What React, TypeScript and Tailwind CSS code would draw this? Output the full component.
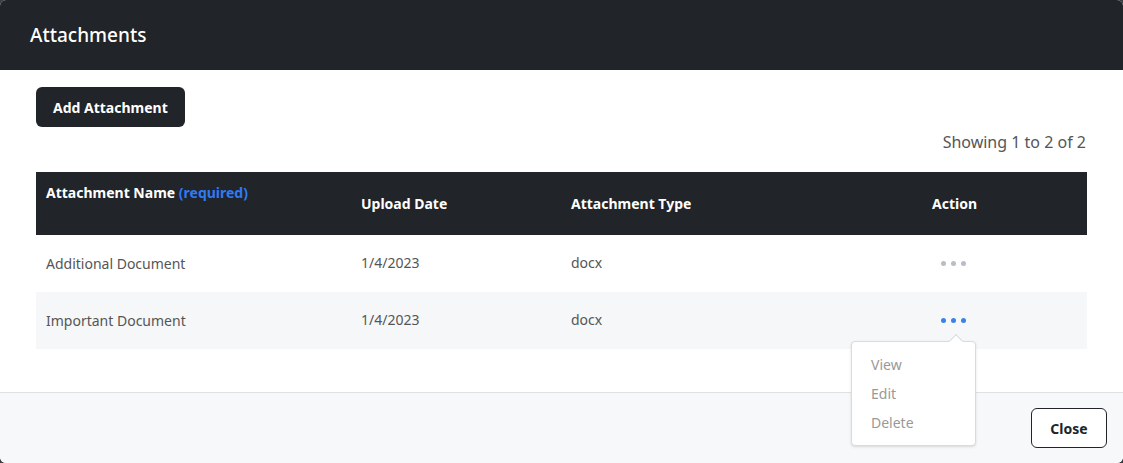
import { useState } from 'react';

const ROWS = [
  { name: 'Additional Document', date: '1/4/2023', type: 'docx' },
  { name: 'Important Document', date: '1/4/2023', type: 'docx' },
];

function Dots({ active }: { active?: boolean }) {
  const c = active ? 'bg-[#3b82e6]' : 'bg-[#b7bec6]';
  return (
    <div className="flex gap-[5px]">
      <span className={`h-[5px] w-[5px] rounded-full ${c}`} />
      <span className={`h-[5px] w-[5px] rounded-full ${c}`} />
      <span className={`h-[5px] w-[5px] rounded-full ${c}`} />
    </div>
  );
}

export default function App() {
  const [open] = useState(1);
  return (
    <div className="h-[463px] w-[1123px] bg-[#3a3d42] font-['Inter','Liberation_Sans',sans-serif]">
      <div className="flex h-full flex-col overflow-hidden rounded-md bg-white">
        <div className="flex h-[70px] shrink-0 items-center bg-[#212429] px-[30px] text-[19px] font-medium text-white">
          Attachments
        </div>
        <div className="flex flex-1 flex-col px-9 pt-[17px]">
          <div>
            <button className="h-10 rounded-md bg-[#212429] px-[17px] text-[14px] font-bold text-white">
              Add Attachment
            </button>
          </div>
          <div className="mt-[3px] pr-[1px] text-right text-[16px] text-[#555]">Showing 1 to 2 of 2</div>
          <table className="mt-[18px] w-full table-fixed text-left text-[14px]">
            <thead>
              <tr className="h-[63px] bg-[#212429] text-white">
                <th className="w-[325px] px-[10px] pb-[22px] font-bold">
                  Attachment Name <span className="text-[#2f7bf5]">(required)</span>
                </th>
                <th className="w-[210px] font-bold">Upload Date</th>
                <th className="w-[361px] font-bold">Attachment Type</th>
                <th className="font-bold">Action</th>
              </tr>
            </thead>
            <tbody className="text-[#555]">
              {ROWS.map((r, i) => (
                <tr key={r.name} className={`h-[57px] ${i % 2 ? 'bg-[#f6f7f9]' : 'bg-white'}`}>
                  <td className="px-[10px]">{r.name}</td>
                  <td className="pb-[2px]">{r.date}</td>
                  <td className="pb-[2px]">{r.type}</td>
                  <td>
                    <div className="relative ml-[9px] w-fit">
                      <Dots active={open === i} />
                      {open === i && (
                        <div className="absolute left-[-90px] top-[23px] z-10 w-[125px] rounded-[4px] border border-[#d8dbe0] bg-white py-[8px] text-[14px] text-[#999] shadow-sm">
                          <div className="absolute -top-[6px] left-[99px] h-[10px] w-[10px] rotate-45 border-l border-t border-[#d8dbe0] bg-white" />
                          <div className="px-[19px] py-[4px]">View</div>
                          <div className="px-[19px] py-[4px]">Edit</div>
                          <div className="px-[19px] py-[4px]">Delete</div>
                        </div>
                      )}
                    </div>
                  </td>
                </tr>
              ))}
            </tbody>
          </table>
        </div>
        <div className="flex h-[71px] shrink-0 items-center justify-end border-t border-[#dde0e4] bg-[#f7f8fa] px-4">
          <button className="h-10 w-[76px] rounded-md border border-[#212429] bg-white font-['Liberation_Sans',sans-serif] text-[14px] font-bold text-[#212429]">
            Close
          </button>
        </div>
      </div>
    </div>
  );
}
